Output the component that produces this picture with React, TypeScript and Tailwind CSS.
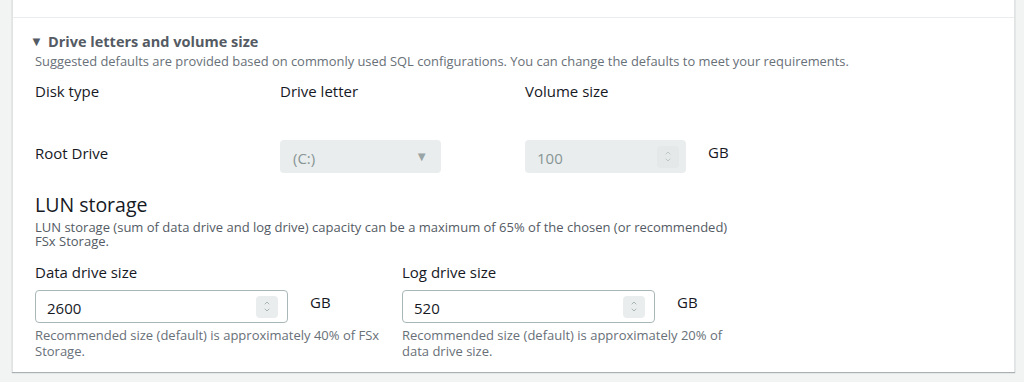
import { ChevronDown, ChevronUp } from 'lucide-react'

const font = { fontFamily: '"Open Sans", "Liberation Sans", Arial, sans-serif' }

function Spinner({ disabled }: { disabled?: boolean }) {
  return (
    <div
      className={`flex flex-col items-center justify-center w-[22px] h-[22px] rounded-sm ${
        disabled ? 'bg-[#e4e8e8] text-[#aab7b8]' : 'bg-[#eaeded] text-[#879596]'
      }`}
    >
      <ChevronUp className="w-[10px] h-[8px] -mb-[1px]" strokeWidth={2} />
      <ChevronDown className="w-[10px] h-[8px]" strokeWidth={2} />
    </div>
  )
}

function NumberField({ value, disabled }: { value: string; disabled?: boolean }) {
  if (disabled) {
    return (
      <div className="w-[161px] h-[33px] bg-[#eaeded] rounded-sm flex items-center justify-between pl-3 pr-[7px]">
        <span className="text-[15px] text-[#879596] pt-[3px]">{value}</span>
        <Spinner disabled />
      </div>
    )
  }
  return (
    <div className="w-[253px] h-[33px] bg-white border border-[#aab7b8] rounded-sm flex items-center justify-between pl-[11px] pr-[9px]">
      <span className="text-[15px] text-[#16191f] pt-[3px]">{value}</span>
      <Spinner />
    </div>
  )
}

function SizeInput({ label, value, help }: { label: string; value: string; help: string }) {
  return (
    <div className="w-[367px]">
      <div className="text-[15px] text-[#16191f] h-[20px] leading-[20px] mb-[8px]">{label}</div>
      <div className="flex items-start">
        <NumberField value={value} />
        <span className="ml-[22px] text-[15px] text-[#16191f] leading-[20px] mt-[2px]">GB</span>
      </div>
      <p className="mt-[4px] text-[13px] leading-[16px] text-[#687078] w-[348px]">{help}</p>
    </div>
  )
}

export default function App() {
  return (
    <div className="w-[1024px] h-[382px] bg-[#f2f3f3] overflow-hidden" style={font}>
      <div className="ml-[12px] w-[1003px] h-[382px] -mt-[10px] bg-white border-x border-[#e1e4e4] shadow-[0_1px_1px_0_rgba(0,28,36,0.3)]">
        <div className="h-[28px] border-b border-[#eaeded]" />
        <div className="pl-[22px] pr-4">
          <div className="flex items-center mt-[14px] h-[20px]">
            <span className="text-[#545b64] text-[13px] w-[18px] ml-[-5px]">▼</span>
            <h2 className="text-[14.5px] font-bold text-[#545b64] leading-[20px]">
              Drive letters and volume size
            </h2>
          </div>
          <p className="text-[12.9px] leading-[16px] text-[#687078] mt-[1px]">
            Suggested defaults are provided based on commonly used SQL configurations. You can change the defaults to meet your requirements.
          </p>

          <div className="grid grid-cols-[245px_245px_1fr] mt-[12px] text-[15px] text-[#16191f] leading-[20px]">
            <div>Disk type</div>
            <div>Drive letter</div>
            <div>Volume size</div>
          </div>

          <div className="grid grid-cols-[245px_245px_1fr] mt-[39px] text-[15px] text-[#16191f]">
            <div className="leading-[20px] pt-[3px]">Root Drive</div>
            <div className="w-[161px] h-[33px] bg-[#eaeded] rounded-sm flex items-center justify-between pl-[13px] pr-[13px]">
              <span className="text-[#879596] pt-[3px]">(C:)</span>
              <span className="text-[#98a4a5] text-[13px]">▼</span>
            </div>
            <div className="flex items-start">
              <NumberField value="100" disabled />
              <span className="ml-[22px] leading-[20px] pt-[2px]">GB</span>
            </div>
          </div>

          <h3 className="mt-[20px] text-[19.5px] leading-[24px] text-[#16191f]">LUN storage</h3>
          <p className="text-[13px] leading-[14px] text-[#545b64] w-[712px] mt-[3px]">
            LUN storage (sum of data drive and log drive) capacity can be a maximum of 65% of the chosen (or recommended) FSx Storage.
          </p>

          <div className="flex mt-[14px]">
            <SizeInput
              label="Data drive size"
              value="2600"
              help="Recommended size (default) is approximately 40% of FSx Storage."
            />
            <SizeInput
              label="Log drive size"
              value="520"
              help="Recommended size (default) is approximately 20% of data drive size."
            />
          </div>
        </div>
      </div>
    </div>
  )
}
